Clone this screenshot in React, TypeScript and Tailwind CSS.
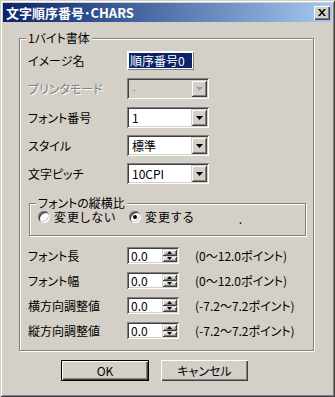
import React from 'react';

const frame =
  'shadow-[inset_1px_1px_#d4d0c8,inset_-1px_-1px_#404040,inset_2px_2px_#fff,inset_-2px_-2px_#808080]';
const sunken =
  'shadow-[inset_1px_1px_#808080,inset_-1px_-1px_#fff,inset_2px_2px_#404040,inset_-2px_-2px_#d4d0c8]';
const raised =
  'shadow-[inset_1px_1px_#d4d0c8,inset_-1px_-1px_#404040,inset_2px_2px_#fff,inset_-2px_-2px_#808080]';
const button = 'shadow-[inset_1px_1px_#fff,inset_-1px_-1px_#404040,inset_-2px_-2px_#808080]';

const Arrow = ({ color = '#000' }: { color?: string }) => (
  <svg width="7" height="4" viewBox="0 0 7 4">
    <polygon points="0,0 7,0 3.5,4" fill={color} />
  </svg>
);

const Group: React.FC<{ label: string; className: string; children: React.ReactNode }> = ({
  label,
  className,
  children,
}) => (
  <div className={`relative border border-[#808080] shadow-[inset_1px_1px_#fff,1px_1px_#fff] ${className}`}>
    <span className="absolute left-[6px] -top-[7px] px-[2px] bg-[#d4d0c8] leading-[12px]">{label}</span>
    {children}
  </div>
);

const Combo: React.FC<{ value: string; disabled?: boolean }> = ({ value, disabled }) => (
  <div
    className={`w-[82px] h-[21px] flex items-center p-[2px] ${sunken} ${disabled ? 'bg-[#d4d0c8]' : 'bg-white'}`}
  >
    <span className={`flex-1 pl-[3px] leading-[14px] ${disabled ? 'text-[#a0a0a0]' : 'text-black'}`}>
      {value}
    </span>
    <div className={`w-[16px] h-[17px] flex items-center justify-center bg-[#d4d0c8] ${raised}`}>
      <Arrow color={disabled ? '#a0a0a0' : '#000'} />
    </div>
  </div>
);

const SpinArrow = ({ up }: { up?: boolean }) => (
  <svg width="5" height="3" viewBox="0 0 5 3">
    <polygon points={up ? '2.5,0 5,3 0,3' : '0,0 5,0 2.5,3'} fill="#000" />
  </svg>
);

const Spin: React.FC<{ value: string }> = ({ value }) => (
  <div className={`w-[52px] h-[17px] flex p-[2px] bg-white ${sunken}`}>
    <span className="flex-1 pl-[2px] leading-[13px]">{value}</span>
    <div className="w-[15px] flex flex-col">
      <div className={`flex-1 flex items-center justify-center bg-[#d4d0c8] ${raised}`}>
        <SpinArrow up />
      </div>
      <div className={`flex-1 flex items-center justify-center bg-[#d4d0c8] ${raised}`}>
        <SpinArrow />
      </div>
    </div>
  </div>
);

const Radio: React.FC<{ label: string; checked?: boolean; className?: string }> = ({
  label,
  checked,
  className = '',
}) => (
  <label className={`flex items-center gap-[4px] ${className}`}>
    <span className="w-[12px] h-[12px] rounded-full bg-white flex items-center justify-center shadow-[inset_1px_1px_#808080,inset_-1px_-1px_#fff,inset_2px_2px_#404040,inset_-2px_-2px_#d4d0c8]">
      {checked && <span className="w-[4px] h-[4px] rounded-full bg-black" />}
    </span>
    <span className="leading-[14px] tracking-[1px]">{label}</span>
  </label>
);

const Row: React.FC<{ label: string; className?: string; disabled?: boolean; children: React.ReactNode }> = ({
  label,
  className = '',
  disabled,
  children,
}) => (
  <div className={`flex items-center ${className}`}>
    <span
      className={`w-[99px] leading-[14px] ${disabled ? 'text-[#808080] [text-shadow:1px_1px_#fff]' : ''}`}
    >
      {label}
    </span>
    {children}
  </div>
);

const SpinRow: React.FC<{ label: string; value: string; range: string; className?: string }> = ({
  label,
  value,
  range,
  className = '',
}) => (
  <div className={`flex items-center h-[17px] ${className}`}>
    <span className="w-[99px] leading-[14px]">{label}</span>
    <Spin value={value} />
    <span className="ml-[16px] leading-[14px]">{range}</span>
  </div>
);

export default function App() {
  return (
    <div
      className={`w-[335px] h-[397px] bg-[#d4d0c8] p-[3px] ${frame} font-['Noto_Sans_CJK_JP',sans-serif] [font-feature-settings:'palt'] text-[12px] text-black`}
    >
      <div className="h-[19px] flex items-center justify-between bg-gradient-to-r from-[#0a246a] to-[#a6caf0] pl-[3px] pr-[2px]">
        <span className="text-white font-bold text-[13px] leading-none">文字順序番号･CHARS</span>
        <div className={`w-[16px] h-[14px] flex items-center justify-center bg-[#d4d0c8] ${button}`}>
          <svg width="8" height="7" viewBox="0 0 8 7">
            <path d="M0 0h2l2 2.5L6 0h2L5 3.5 8 7H6L4 4.5 2 7H0l3-3.5z" fill="#000" />
          </svg>
        </div>
      </div>

      <div className="pl-[16px] pt-[16px]">
        <Group label="1バイト書体" className="w-[295px] h-[313px] pl-[8px] pt-[12px]">
          <Row label="イメージ名" className="h-[19px]">
            <div className="w-[67px] h-[19px] p-[1px] bg-[#d4d0c8] shadow-[inset_1px_1px_#fff,inset_-1px_-1px_#808080]">
              <div className="h-full bg-white p-[1px]">
                <span className="block h-full bg-[#0a246a] text-white leading-[15px] px-[1px]">順序番号0</span>
              </div>
            </div>
          </Row>
          <Row label="プリンタモード" className="h-[21px] mt-[8px]" disabled>
            <Combo value="-" disabled />
          </Row>
          <Row label="フォント番号" className="h-[21px] mt-[8px]">
            <Combo value="1" />
          </Row>
          <Row label="スタイル" className="h-[21px] mt-[7px]">
            <Combo value="標準" />
          </Row>
          <Row label="文字ピッチ" className="h-[21px] mt-[7px]">
            <Combo value="10CPI" />
          </Row>

          <Group label="フォントの縦横比" className="w-[277px] h-[33px] ml-[1px] mt-[19px] pl-[8px] pt-[6px]">
            <div className="flex items-center">
              <Radio label="変更しない" className="w-[91px]" />
              <Radio label="変更する" checked />
              <span className="ml-[44px] mt-[4px] leading-[10px]">.</span>
            </div>
          </Group>

          <SpinRow label="フォント長" value="0.0" range="(0〜12.0ポイント)" className="mt-[11px]" />
          <SpinRow label="フォント幅" value="0.0" range="(0〜12.0ポイント)" className="mt-[8px]" />
          <SpinRow label="横方向調整値" value="0.0" range="(-7.2〜7.2ポイント)" className="mt-[8px]" />
          <SpinRow label="縦方向調整値" value="0.0" range="(-7.2〜7.2ポイント)" className="mt-[8px]" />
        </Group>

        <div className="flex gap-[12px] ml-[42px] mt-[9px]">
          <button className="w-[88px] h-[21px] border border-black bg-[#d4d0c8] shadow-[inset_1px_1px_#fff,inset_-1px_-1px_#404040,inset_-2px_-2px_#808080] leading-[14px]">
            OK
          </button>
          <button className={`w-[87px] h-[21px] bg-[#d4d0c8] ${button} leading-[14px]`}>キャンセル</button>
        </div>
      </div>
    </div>
  );
}
